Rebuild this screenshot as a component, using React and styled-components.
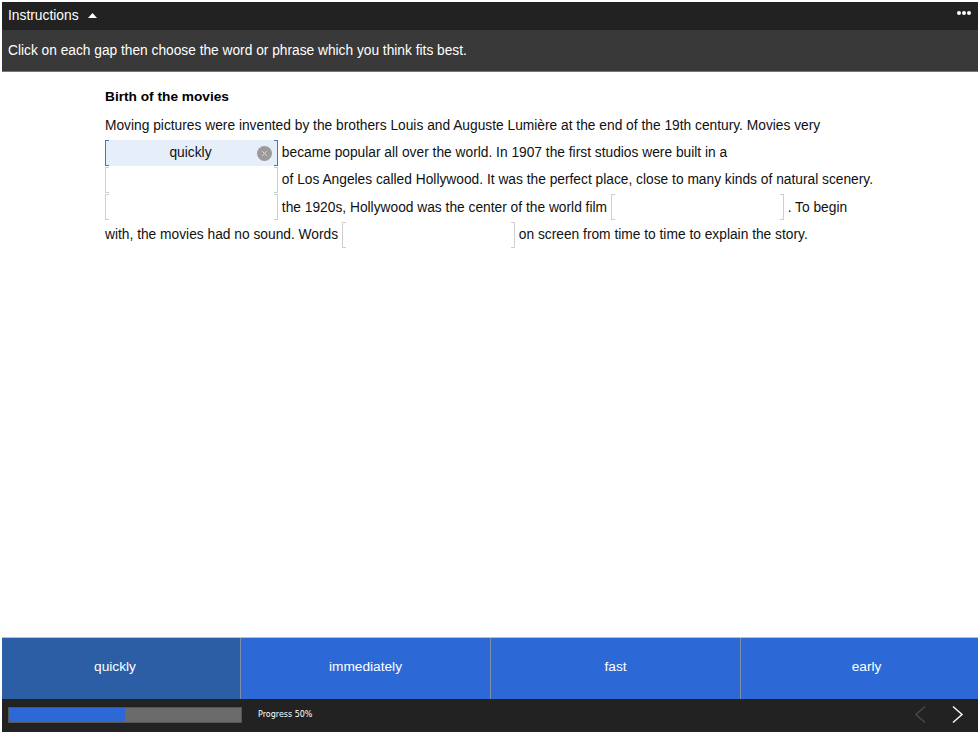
import React from "react";
import styled, { createGlobalStyle } from "styled-components";

const Global = createGlobalStyle`
  html, body { margin: 0; padding: 0; background: #fff; }
  body { font-family: "Liberation Sans", Arial, sans-serif; overflow: hidden; }
  #root { width: 980px; height: 734px; }
`;
const Page = styled.div`
  width: 980px; height: 734px; box-sizing: border-box; padding: 2px;
  display: flex; flex-direction: column;
`;
const TopBar = styled.header`
  height: 28px; flex: none; background: #222; color: #fff;
  display: flex; align-items: center; justify-content: space-between;
  padding: 0 7px 2px 6px; box-sizing: border-box; font-size: 13.8px;
`;
const Toggle = styled.div`display: flex; align-items: center; gap: 9px;`;
const Dots = styled.div`
  display: flex; gap: 1px; margin-top: -4px;
`;
const Dot = styled.span`width: 4px; height: 4px; border-radius: 50%; background: #fff;`;
const InstructionBar = styled.div`
  height: 42px; flex: none; box-sizing: border-box; background: #393939; color: #fff;
  border-bottom: 1px solid #777; padding: 0 6px 1px;
  display: flex; align-items: center; font-size: 13.74px;
`;
const Main = styled.main`flex: 1; padding: 17px 0 0 103px;`;
const Title = styled.h1`
  margin: 0 0 7px; font-size: 13.7px; line-height: 16px; font-weight: bold; color: #000;
`;
const Passage = styled.p`
  margin: 0; width: 771px; font-size: 13.77px; line-height: 27.2px; color: #111;
`;
const Gap = styled.span`
  display: inline-block; position: relative; box-sizing: border-box;
  width: 173px; height: 26px; vertical-align: middle; margin-top: -1px;
  text-align: center; line-height: 26px; padding-right: 2px;
  background: ${p => (p.$filled ? "#e6eefa" : "transparent")};
  &::before, &::after {
    content: ""; position: absolute; top: 0; bottom: 0; width: 3px;
    border: 1px solid ${p => (p.$filled ? "#4a76b8" : "#cfcfcf")};
  }
  &::before { left: 0; border-right: 0; }
  &::after { right: 0; border-left: 0; }
`;
const Clear = styled.span`
  position: absolute; right: 6px; top: 6px; width: 15px; height: 15px;
  display: flex;
`;
const Options = styled.div`
  height: 61px; flex: none; display: flex; border-top: 1px solid #a9c6ee;
`;
const Option = styled.button`
  border: 0; margin: 0; width: ${p => p.$w}px; flex: none;
  padding: 0 ${p => p.$pr || 0}px 5px ${p => p.$pl || 0}px;
  background: ${p => (p.$active ? "#2c5ea6" : "#2d69d6")}; color: #fff;
  font: 13.7px "Liberation Sans", Arial, sans-serif;
  border-right: ${p => (p.$last ? "0" : "1px solid #7d8fa8")};
`;
const Footer = styled.footer`
  height: 33px; flex: none; background: #222;
  display: flex; align-items: center; padding: 0 14px 2px 6px; box-sizing: border-box;
`;
const Track = styled.div`
  width: 234px; height: 16px; box-sizing: border-box; background: #6b6b6b;
  border: 1px solid #555; display: flex;
`;
const Fill = styled.div`background: #2d69d6; height: 100%;`;
const ProgressLabel = styled.span`
  margin-left: 16px; color: #fff; font: 8px "DejaVu Sans", sans-serif;
`;
const Nav = styled.nav`margin-left: auto; display: flex; gap: 26px; align-items: center;`;

const Caret = () => (
  <svg width="9" height="5" viewBox="0 0 9 5"><path d="M0 5 4.5 0 9 5Z" fill="#fff" /></svg>
);
const Chevron = ({ dir, color }) => (
  <svg width="12" height="19" viewBox="0 0 12 19" fill="none">
    <path d={dir === "l" ? "M11 1.5 2 9.5l9 8" : "M1 1.5 10 9.5l-9 8"} stroke={color} strokeWidth="1.4" />
  </svg>
);

export default function App() {
  return (
    <Page>
      <Global />
      <TopBar>
        <Toggle>Instructions <Caret /></Toggle>
        <Dots><Dot /><Dot /><Dot /></Dots>
      </TopBar>
      <InstructionBar>Click on each gap then choose the word or phrase which you think fits best.</InstructionBar>
      <Main>
        <Title>Birth of the movies</Title>
        <Passage>
          Moving pictures were invented by the brothers Louis and Auguste Lumière at the end of the 19th century. Movies very{" "}
          <Gap $filled>
            quickly
            <Clear>
              <svg width="15" height="15" viewBox="0 0 15 15">
                <circle cx="7.5" cy="7.5" r="7.5" fill="#9b9b9b" />
                <path d="M5.2 5.2l4.6 4.6M9.8 5.2l-4.6 4.6" stroke="#d8d8d8" strokeWidth="1" />
              </svg>
            </Clear>
          </Gap>{" "}
          became popular all over the world. In 1907 the first studios were built in a{" "}
          <Gap />{" "}
          of Los Angeles called Hollywood. It was the perfect place, close to many kinds of natural scenery.{" "}
          <Gap />{" "}
          the 1920s, Hollywood was the center of the world film <Gap /> . To begin with, the movies had no sound. Words{" "}
          <Gap />{" "}
          on screen from time to time to explain the story.
        </Passage>
      </Main>
      <Options>
        <Option $w={239} $pr={12} $active>quickly</Option>
        <Option $w={250}>immediately</Option>
        <Option $w={250}>fast</Option>
        <Option $w={237} $pl={14} $last>early</Option>
      </Options>
      <Footer>
        <Track><Fill style={{ width: "50%" }} /></Track>
        <ProgressLabel>Progress 50%</ProgressLabel>
        <Nav>
          <Chevron dir="l" color="#4a4a4a" />
          <Chevron dir="r" color="#fff" />
        </Nav>
      </Footer>
    </Page>
  );
}
